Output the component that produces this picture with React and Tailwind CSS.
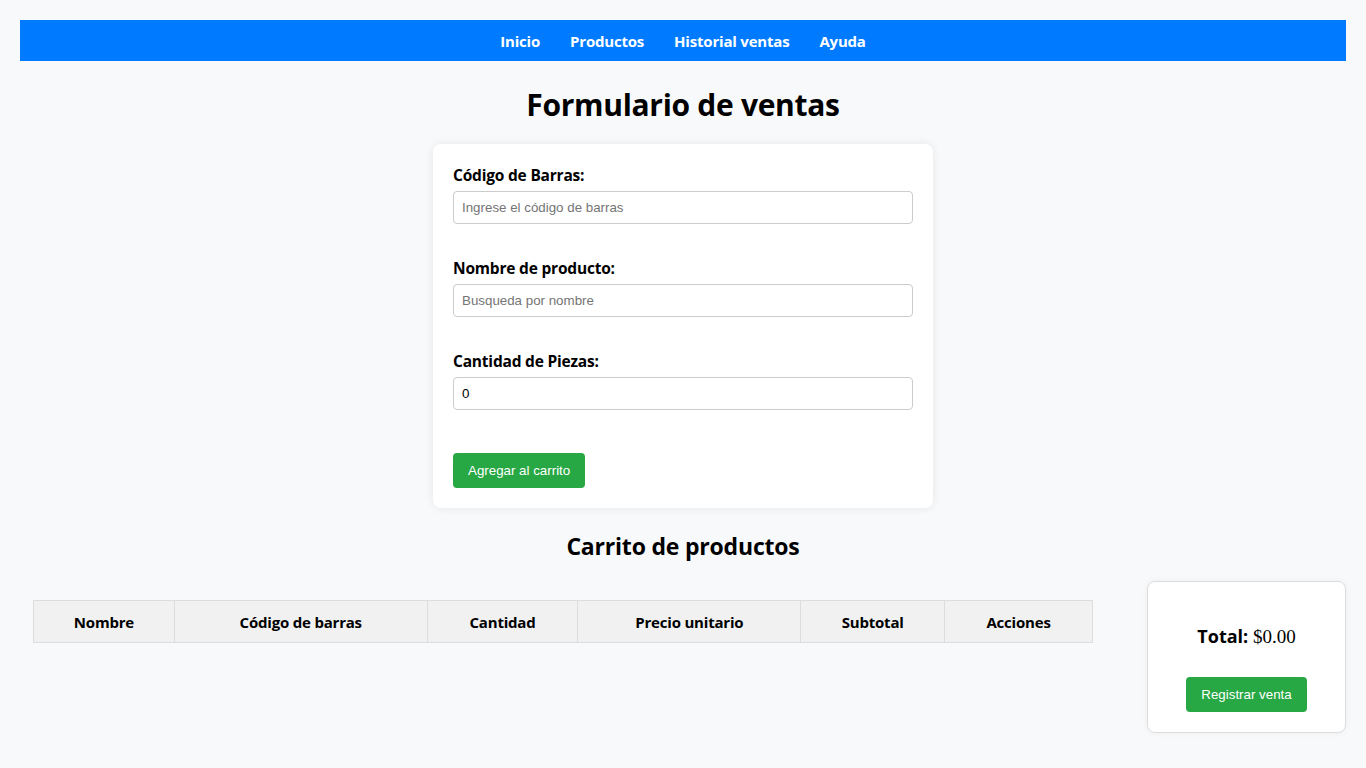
const NAV = ['Inicio', 'Productos', 'Historial ventas', 'Ayuda'];

const COLUMNS = [
  { label: 'Nombre', width: 'w-[141px]' },
  { label: 'Código de barras', width: 'w-[253px]' },
  { label: 'Cantidad', width: 'w-[151px]' },
  { label: 'Precio unitario', width: 'w-[223px]' },
  { label: 'Subtotal', width: 'w-[144px]' },
  { label: 'Acciones', width: 'w-[148px]' },
];

function Field({ label, placeholder, defaultValue, type = 'text' }) {
  return (
    <div className="mb-[34px]">
      <label className="block text-[15.5px] leading-[21px] font-bold text-black mb-[5px] tracking-[-0.2px]">
        {label}
      </label>
      <input
        type={type}
        placeholder={placeholder}
        defaultValue={defaultValue}
        className="block w-full h-[33px] px-[8px] bg-white border border-[#cccccc] rounded-[4px] text-[13.33px] text-black placeholder-[#757575] font-['Liberation_Sans',Arial,sans-serif] focus:outline-none"
      />
    </div>
  );
}

export default function App() {
  return (
    <div className="min-h-[768px] bg-[#f8f9fa] pt-[20px] font-['Open_Sans','Noto_Sans',sans-serif] text-black">
      <nav className="mx-[20px] h-[41px] pt-[2px] bg-[#007bff] flex items-center justify-center gap-[30px]">
        {NAV.map((item) => (
          <a key={item} href="#" className="text-white font-bold text-[15px] tracking-[-0.2px]">
            {item}
          </a>
        ))}
      </nav>

      <h1 className="text-center text-[30px] leading-[38px] font-bold mt-[25px] tracking-[-0.3px]">
        Formulario de ventas
      </h1>

      <div className="mx-auto mt-[20px] w-[500px] bg-white rounded-[8px] shadow-[0_0_10px_rgba(0,0,0,0.08)] px-[20px] pt-[21px] pb-[20px]">
        <Field label="Código de Barras:" placeholder="Ingrese el código de barras" />
        <Field label="Nombre de producto:" placeholder="Busqueda por nombre" />
        <div className="mb-[43px]">
          <label className="block text-[15.5px] leading-[21px] font-bold mb-[5px] tracking-[-0.2px]">
            Cantidad de Piezas:
          </label>
          <input
            type="number"
            defaultValue={0}
            className="block w-full h-[33px] px-[8px] bg-white border border-[#cccccc] rounded-[4px] text-[13.33px] font-['Liberation_Sans',Arial,sans-serif] focus:outline-none"
          />
        </div>
        <button className="h-[35px] px-[15px] bg-[#28a745] text-white rounded-[4px] text-[13.33px] font-['Liberation_Sans',Arial,sans-serif]">
          Agregar al carrito
        </button>
      </div>

      <h2 className="text-center text-[23px] leading-[30px] font-bold mt-[23px] tracking-[-0.2px]">
        Carrito de productos
      </h2>

      <div className="flex items-start justify-between mx-[20px] mt-[20px] pb-[35px]">
        <table className="ml-[13px] mt-[19px] border-collapse w-[1060px]">
          <thead>
            <tr className="bg-[#f1f1f1]">
              {COLUMNS.map((col) => (
                <th
                  key={col.label}
                  className={`${col.width} h-[42px] pt-[2px] border border-[#dddddd] text-center text-[15px] font-bold tracking-[-0.2px]`}
                >
                  {col.label}
                </th>
              ))}
            </tr>
          </thead>
          <tbody />
        </table>

        <div className="w-[199px] bg-white border border-[#dddddd] rounded-[8px] shadow-[0_0_6px_rgba(0,0,0,0.05)] px-[20px] pt-[42px] pb-[20px] flex flex-col items-center">
          <p className="text-[18px] leading-[25px]">
            <span className="font-bold">Total:</span>{' '}
            <span className="text-[19px] font-['Liberation_Serif','Times_New_Roman',serif]">$0.00</span>
          </p>
          <button className="mt-[28px] h-[35px] px-[15px] bg-[#28a745] text-white rounded-[4px] text-[13.33px] font-['Liberation_Sans',Arial,sans-serif]">
            Registrar venta
          </button>
        </div>
      </div>
    </div>
  );
}
